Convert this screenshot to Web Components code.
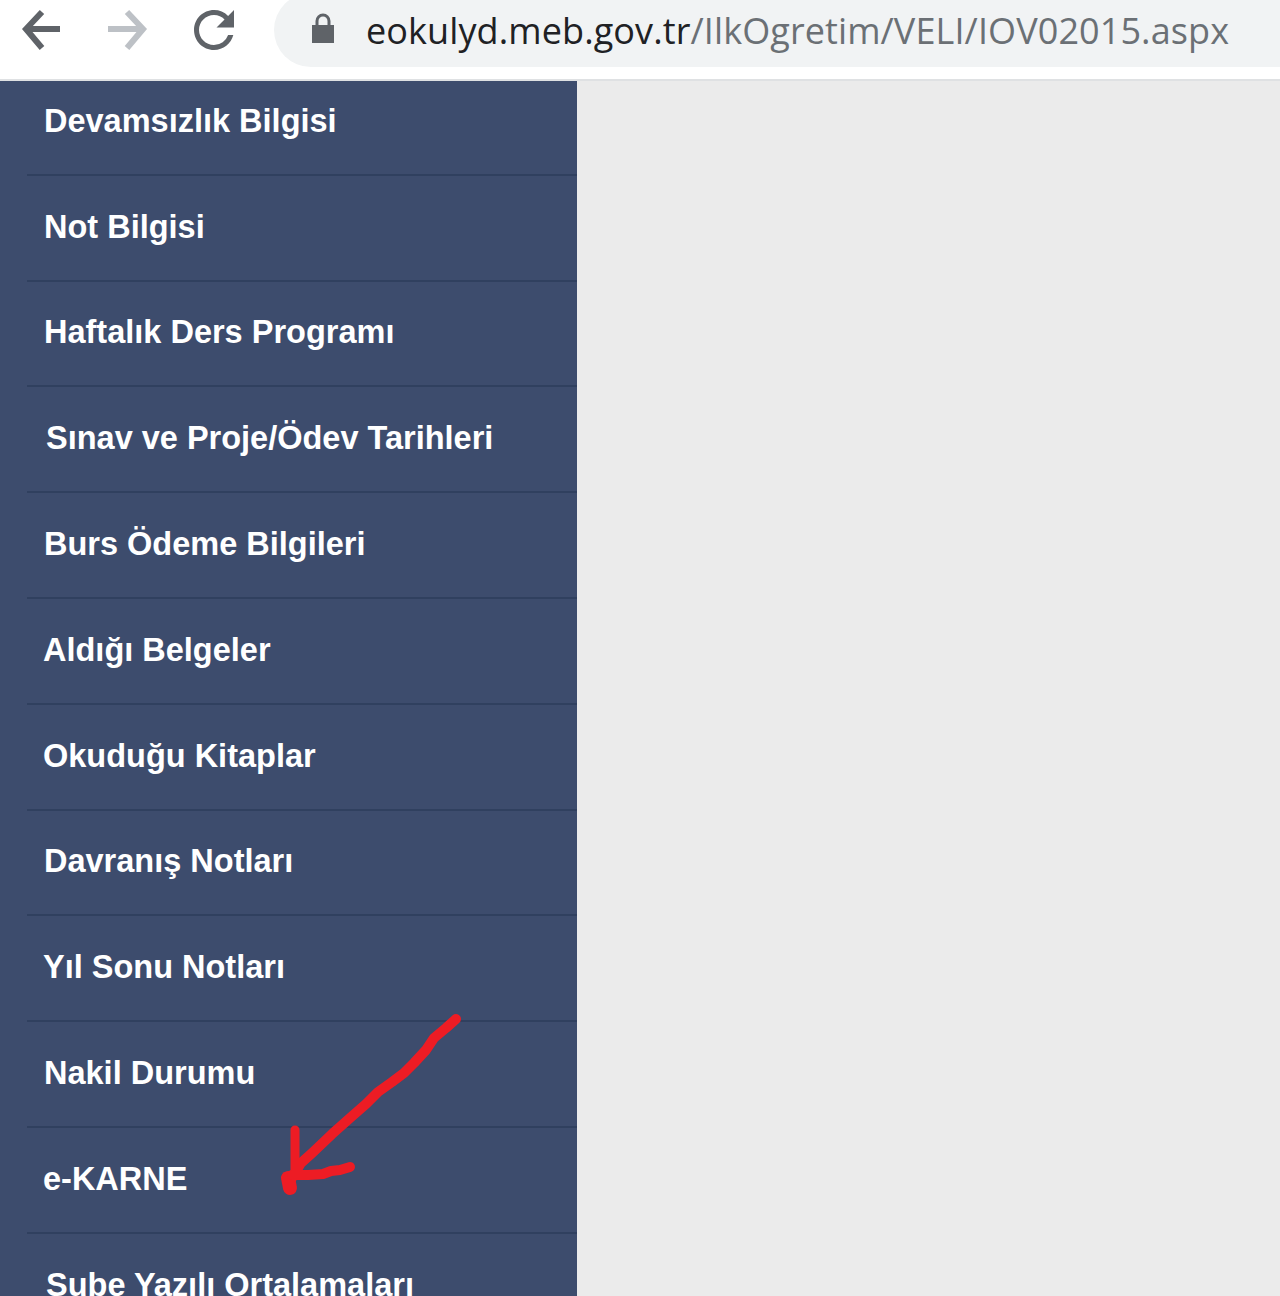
<!DOCTYPE html>
<html lang="tr">
<head>
<meta charset="utf-8">
<title>e-Okul Veli</title>
<style>
  html, body { margin: 0; height: 1296px; overflow: hidden; background: #ebebeb; }
</style>
</head>
<body>
<browser-bar url-host="eokulyd.meb.gov.tr" url-path="/IlkOgretim/VELI/IOV02015.aspx"></browser-bar>
<page-body>
  <menu-item>Devamsızlık Bilgisi</menu-item>
  <menu-item>Not Bilgisi</menu-item>
  <menu-item>Haftalık Ders Programı</menu-item>
  <menu-item x="46">Sınav ve Proje/Ödev Tarihleri</menu-item>
  <menu-item>Burs Ödeme Bilgileri</menu-item>
  <menu-item x="43">Aldığı Belgeler</menu-item>
  <menu-item x="43">Okuduğu Kitaplar</menu-item>
  <menu-item>Davranış Notları</menu-item>
  <menu-item x="43">Yıl Sonu Notları</menu-item>
  <menu-item>Nakil Durumu</menu-item>
  <menu-item x="43">e-KARNE</menu-item>
  <menu-item x="46">Şube Yazılı Ortalamaları</menu-item>
</page-body>
<script>
class BrowserBar extends HTMLElement {
  constructor() {
    super();
    this.attachShadow({mode: 'open'});
    this.shadowRoot.innerHTML = `
      <style>
        :host { display: flex; align-items: flex-start; height: 79px; background: #fff; border-bottom: 2px solid #dfe1e3; overflow: hidden; }
        .nav { display: flex; gap: 26.5px; padding: 0 0 0 11px; width: 274px; box-sizing: border-box; flex: none; }
        .nav svg { display: block; width: 60px; height: 60px; }
        .pill { flex: 1; display: flex; align-items: center; height: 74px; margin-top: -7px; background: #f1f3f4; border-radius: 37px 0 0 37px; padding-left: 37px; }
        .pill svg { width: 24px; height: 32px; flex: none; margin-top: -4px; }
        .url { margin-left: 31px; font: 36px "Open Sans", sans-serif; letter-spacing: .1px; color: #6b7075; white-space: nowrap; }
        .url b { font-weight: 400; color: #202124; }
      </style>
      <div class="nav">
        <svg viewBox="0 0 60 60" fill="none" stroke="#5f6368" stroke-width="6">
          <path d="M49 29H16M31 12 15 29l16 19"/>
        </svg>
        <svg viewBox="0 0 60 60" fill="none" stroke="#bdc1c6" stroke-width="6">
          <path d="M10 29h33M29 12l16 17-16 19"/>
        </svg>
        <svg viewBox="0 0 24 24" fill="#5f6368">
          <path d="M17.65 6.35A7.958 7.958 0 0 0 12 4c-4.42 0-7.99 3.58-7.99 8s3.57 8 7.99 8c3.73 0 6.84-2.55 7.73-6h-2.08A5.99 5.99 0 0 1 12 18c-3.31 0-6-2.69-6-6s2.69-6 6-6c1.66 0 3.14.69 4.22 1.78L13 11h7V4l-2.35 2.35z"/>
        </svg>
      </div>
      <div class="pill">
        <svg viewBox="0 0 24 32" fill="#5f6368">
          <path d="M1 13h22v18H1z"/>
          <path d="M6 14V9a6 6 0 0 1 12 0v5" fill="none" stroke="#5f6368" stroke-width="3"/>
        </svg>
        <span class="url"><b></b><span></span></span>
      </div>`;
    this.shadowRoot.querySelector('.url b').textContent = this.getAttribute('url-host');
    this.shadowRoot.querySelector('.url span').textContent = this.getAttribute('url-path');
  }
}

class PageBody extends HTMLElement {
  constructor() {
    super();
    this.attachShadow({mode: 'open'});
    this.shadowRoot.innerHTML = `
      <style>
        :host { display: block; position: relative; height: 1215px; overflow: hidden; background: #ebebeb; }
        nav { width: 577px; background: #3d4c6d; padding-top: 1px; box-sizing: border-box; margin-top: -12px; height: calc(100% + 12px); }
        .arrow { position: absolute; left: 0; top: -81px; width: 1280px; height: 1296px; pointer-events: none; }
      </style>
      <nav><slot></slot></nav>
      <svg class="arrow" viewBox="0 0 1280 1296" fill="none" stroke="#ed1c24" stroke-width="10" stroke-linecap="round" stroke-linejoin="round">
        <path d="M456 1019 446 1028 434 1038 426 1050 414 1063 404 1073 392 1082 378 1092 366 1104 350 1118 332 1134 312 1153 301 1163 289 1183"/>
        <path d="M295 1130 295 1172" stroke-width="9"/>
        <path d="M288 1178 290 1188" stroke-width="14"/>
        <path d="M292 1175 308 1175 323 1174 331 1171 340 1170 350 1167"/>
      </svg>`;
  }
}

class MenuItem extends HTMLElement {
  constructor() {
    super();
    this.attachShadow({mode: 'open'});
    this.shadowRoot.innerHTML = `
      <style>
        :host { display: block; height: 105.8px; padding-left: 27px; box-sizing: border-box; }
        a { display: flex; align-items: center; height: 100%; box-sizing: border-box; border-bottom: 2px solid #30405f;
            padding-left: calc(var(--x, 44px) - 27px); padding-bottom: 1px; color: #fff; text-decoration: none;
            font: bold 32.5px "Liberation Sans", Arial, sans-serif; white-space: nowrap; }
      </style>
      <a href="#"><slot></slot></a>`;
  }
  connectedCallback() {
    if (this.getAttribute('x')) this.style.setProperty('--x', this.getAttribute('x') + 'px');
  }
}

customElements.define('browser-bar', BrowserBar);
customElements.define('page-body', PageBody);
customElements.define('menu-item', MenuItem);
</script>
</body>
</html>
